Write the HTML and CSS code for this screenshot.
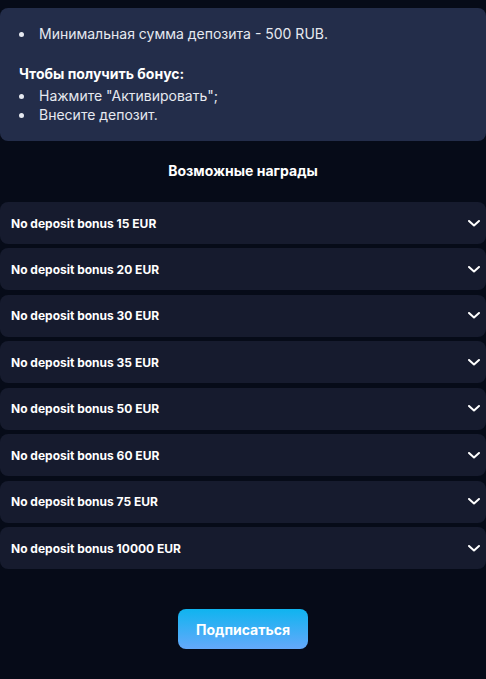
FILE: index.html
```html
<!DOCTYPE html>
<html lang="ru">
<head>
    <meta charset="UTF-8">
    <meta name="viewport" content="width=device-width, initial-scale=1.0">
    <title>Бонус</title>
    <link rel="stylesheet" href="styles.css">
</head>
<body>
    <div class="page">
        <div class="terms">
            <ul class="terms-list">
                <li>Минимальная сумма депозита - 500 RUB.</li>
            </ul>
            <p class="terms-title">Чтобы получить бонус:</p>
            <ul class="terms-list">
                <li>Нажмите "Активировать";</li>
                <li>Внесите депозит.</li>
            </ul>
        </div>

        <h2 class="rewards-title">Возможные награды</h2>

        <div class="rewards">
            <div class="reward">
                <span>No deposit bonus 15 EUR</span>
                <svg class="chevron" viewBox="0 0 12 7"><path d="M1 1l5 4.5L11 1"/></svg>
            </div>
            <div class="reward">
                <span>No deposit bonus 20 EUR</span>
                <svg class="chevron" viewBox="0 0 12 7"><path d="M1 1l5 4.5L11 1"/></svg>
            </div>
            <div class="reward">
                <span>No deposit bonus 30 EUR</span>
                <svg class="chevron" viewBox="0 0 12 7"><path d="M1 1l5 4.5L11 1"/></svg>
            </div>
            <div class="reward">
                <span>No deposit bonus 35 EUR</span>
                <svg class="chevron" viewBox="0 0 12 7"><path d="M1 1l5 4.5L11 1"/></svg>
            </div>
            <div class="reward">
                <span>No deposit bonus 50 EUR</span>
                <svg class="chevron" viewBox="0 0 12 7"><path d="M1 1l5 4.5L11 1"/></svg>
            </div>
            <div class="reward">
                <span>No deposit bonus 60 EUR</span>
                <svg class="chevron" viewBox="0 0 12 7"><path d="M1 1l5 4.5L11 1"/></svg>
            </div>
            <div class="reward">
                <span>No deposit bonus 75 EUR</span>
                <svg class="chevron" viewBox="0 0 12 7"><path d="M1 1l5 4.5L11 1"/></svg>
            </div>
            <div class="reward">
                <span>No deposit bonus 10000 EUR</span>
                <svg class="chevron" viewBox="0 0 12 7"><path d="M1 1l5 4.5L11 1"/></svg>
            </div>
        </div>

        <div class="actions">
            <button class="subscribe">Подписаться</button>
        </div>
    </div>
</body>
</html>
```

FILE: styles.css
```css
* {
    box-sizing: border-box;
    margin: 0;
    padding: 0;
}

body {
    font-family: Inter, 'Noto Sans', sans-serif;
    background: #060b18;
    color: #ffffff;
    min-height: 100vh;
}

.page {
    padding-top: 8px;
}

.terms {
    background: #232d4a;
    border-radius: 8px;
    padding: 16px 20px 17px 19px;
    font-size: 14px;
    color: #e6e9f0;
}

.terms-list {
    list-style: none;
}

.terms-list li {
    position: relative;
    line-height: 19px;
    padding-left: 20px;
}

.terms-list li::before {
    content: '';
    position: absolute;
    left: 0;
    top: 8px;
    width: 5px;
    height: 5px;
    border-radius: 50%;
    background: #e6e9f0;
}

.terms-title {
    font-weight: 700;
    line-height: 20px;
    margin: 21px 0 2px;
    color: #ffffff;
}

.rewards-title {
    text-align: center;
    font-size: 14px;
    font-weight: 700;
    line-height: 20px;
    margin: 20px 0 21px;
}

.rewards {
    display: flex;
    flex-direction: column;
    gap: 4.45px;
}

.reward {
    display: flex;
    align-items: center;
    justify-content: space-between;
    height: 42px;
    padding: 0 6px 0 11px;
    background: #161b2e;
    border-radius: 8px;
    font-size: 12px;
    font-weight: 700;
    cursor: pointer;
}

.chevron {
    width: 12px;
    height: 7px;
    fill: none;
    stroke: #ffffff;
    stroke-width: 2;
    stroke-linecap: round;
    stroke-linejoin: round;
}

.actions {
    display: flex;
    justify-content: center;
    padding: 40px 0 30px;
}

.subscribe {
    width: 130px;
    height: 40px;
    border: none;
    border-radius: 8px;
    background: linear-gradient(180deg, #0fb4ef 0%, #65a9fb 100%);
    color: #ffffff;
    font-family: inherit;
    font-size: 14px;
    font-weight: 700;
    cursor: pointer;
}
```
